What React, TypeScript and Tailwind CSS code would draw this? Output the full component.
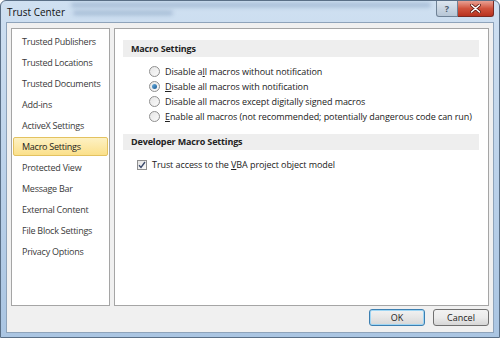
import React from "react";

const font = { fontFamily: '"Open Sans", "Noto Sans", "Liberation Sans", sans-serif' };

const leftItems = [
  "Trusted Publishers",
  "Trusted Locations",
  "Trusted Documents",
  "Add-ins",
  "ActiveX Settings",
  "Macro Settings",
  "Protected View",
  "Message Bar",
  "External Content",
  "File Block Settings",
  "Privacy Options",
];

function Radio({ checked, children }: { checked?: boolean; children: React.ReactNode }) {
  return (
    <div className="flex items-center h-[15px]">
      <div className="w-[11px] h-[11px] rounded-full border border-[#8f8f8f] bg-gradient-to-br from-[#e6e6e6] to-[#fafafa] flex items-center justify-center">
        {checked && <div className="w-[5px] h-[5px] rounded-full bg-gradient-to-br from-[#6ab0e0] to-[#1a5a93]" />}
      </div>
      <span className="ml-[5px] text-[9px] tracking-[-0.08px] text-[#222]">{children}</span>
    </div>
  );
}

export default function App() {
  return (
    <div style={font} className="w-[500px] h-[338px] relative overflow-hidden bg-gradient-to-b from-[#cfe0f1] via-[#bcd2ea] to-[#aac5e2] border border-[#5a6f86] rounded-t-[6px]">
      {/* title bar */}
      <div className="h-[21px] flex items-center pl-[6px] relative">
        <div className="absolute left-[70px] top-[2px] w-[360px] h-[4px] bg-[#5f7ea6] opacity-40 blur-[2px] rounded-full" />
        <div className="absolute left-[72px] top-[10px] w-[100px] h-[4px] bg-[#5f7ea6] opacity-40 blur-[2px] rounded-full" />
        <span className="relative text-[10px] text-[#111] leading-none">Trust Center</span>
        <div className="absolute top-0 right-[5px] flex">
          <div className="w-[22px] h-[16px] rounded-bl-[3px] border border-[#6f8296] border-t-0 bg-gradient-to-b from-[#dde6ef] to-[#b7c6d6] flex items-center justify-center text-[9px] font-bold text-[#4b5a6b]">?</div>
          <div className="w-[36px] h-[16px] rounded-br-[3px] border border-[#7a2a22] border-t-0 border-l-0 bg-gradient-to-b from-[#e8a093] via-[#d0533d] to-[#b8321f] flex items-center justify-center">
            <svg width="11" height="9" viewBox="0 0 11 9">
              <path d="M1.5 1 L9.5 8 M9.5 1 L1.5 8" stroke="#5a1710" strokeWidth="3" strokeLinecap="round" />
              <path d="M1.5 1 L9.5 8 M9.5 1 L1.5 8" stroke="#ffffff" strokeWidth="1.6" strokeLinecap="round" />
            </svg>
          </div>
        </div>
      </div>
      {/* content */}
      <div className="mx-[5px] h-[311px] bg-[#f0f0f0] border border-[#8ea3ba] flex flex-col px-[4px] pt-[5px]">
        <div className="flex gap-[4px] h-[278px]">
          <div className="w-[99px] bg-white border border-[#a5a5a5] pt-[2px] px-[1px]">
            {leftItems.map((it) => (
              <div
                key={it}
                className={
                  it === "Macro Settings"
                    ? "h-[19px] my-[1px] flex items-center pl-[8px] text-[9px] tracking-[-0.25px] text-[#222] rounded-[2px] border border-[#e3c260] bg-gradient-to-b from-[#fdf1c3] to-[#fbe08a]"
                    : "h-[21px] flex items-center pl-[9px] text-[9px] tracking-[-0.25px] text-[#3a3a3a]"
                }
              >
                {it}
              </div>
            ))}
          </div>
          <div className="flex-1 bg-white border border-[#a5a5a5] pt-[11px] pl-[8px] pr-[9px]">
            <div className="h-[17px] bg-[#eeeeee] flex items-center pl-[8px] text-[9px] font-bold tracking-[-0.15px] text-[#222]">Macro Settings</div>
            <div className="pl-[26px] pt-[7px] flex flex-col">
              <Radio>Disable a<u>l</u>l macros without notification</Radio>
              <Radio checked><u>D</u>isable all macros with notification</Radio>
              <Radio>Disable all macros except di<u>g</u>itally signed macros</Radio>
              <Radio><u>E</u>nable all macros (not recommended; potentially dangerous code can run)</Radio>
            </div>
            <div className="mt-[10px] h-[16px] bg-[#eeeeee] flex items-center pl-[8px] text-[9px] font-bold tracking-[-0.15px] text-[#222]">Developer Macro Settings</div>
            <div className="pl-[14px] pt-[8px] flex items-center">
              <div className="w-[10px] h-[10px] border border-[#8f8f8f] bg-gradient-to-br from-[#e4e4e4] to-[#fafafa] flex items-center justify-center">
                <svg width="8" height="8" viewBox="0 0 8 8">
                  <path d="M1 4.2 L3 6.5 L7 1" stroke="#3b4a6b" strokeWidth="1.4" fill="none" />
                </svg>
              </div>
              <span className="ml-[5px] text-[9px] tracking-[-0.08px] text-[#222]">Trust access to the <u>V</u>BA project object model</span>
            </div>
          </div>
        </div>
        <div className="flex justify-end gap-[8px] mt-[3px]">
          <div className="w-[56px] h-[17px] rounded-[3px] border border-[#3c7fb1] shadow-[inset_0_0_0_1px_#9fd6f4] bg-gradient-to-b from-[#f2f2f2] via-[#e6e6e6] to-[#d6d6d6] flex items-center justify-center text-[9px] text-[#222]">OK</div>
          <div className="w-[56px] h-[17px] rounded-[3px] border border-[#707070] bg-gradient-to-b from-[#f2f2f2] via-[#ebebeb] to-[#d6d6d6] flex items-center justify-center text-[9px] text-[#222]">Cancel</div>
        </div>
      </div>
    </div>
  );
}
